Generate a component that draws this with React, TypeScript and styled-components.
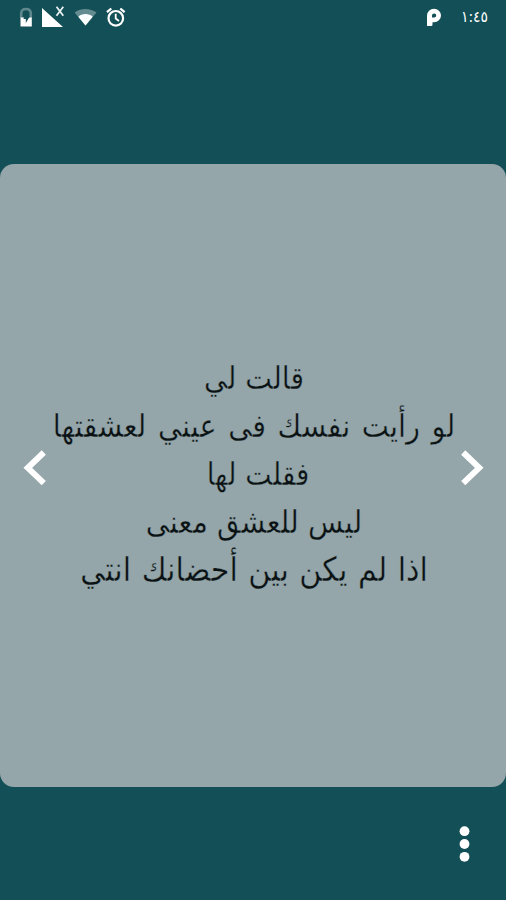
import React from "react";
import styled, { createGlobalStyle } from "styled-components";

const Global = createGlobalStyle`
  body { margin: 0; background: #124f56; }
`;

const Screen = styled.main`
  width: 506px;
  height: 900px;
  display: flex;
  flex-direction: column;
  background: #124f56;
  overflow: hidden;
`;

const StatusBar = styled.header`
  height: 164px;
  box-sizing: border-box;
  padding: 0 18px 0 19px;
  display: flex;
  justify-content: space-between;
  align-items: flex-start;
  color: #fff;
`;

const StatusGroup = styled.div<{ $gap: number }>`
  height: 34px;
  display: flex;
  align-items: center;
  gap: ${(p) => p.$gap}px;
`;

const Icon = styled.svg`
  display: block;
  flex: none;
`;

const Clock = styled.time`
  width: 27px;
  display: flex;
  justify-content: center;
  direction: rtl;
  white-space: nowrap;
  font: 15.5px/34px "DejaVu Sans Condensed", "DejaVu Sans", sans-serif;
`;

const Card = styled.section`
  height: 623px;
  box-sizing: border-box;
  padding: 0 22px 0 23px;
  border-radius: 14px;
  background: #94a6a9;
  display: flex;
  justify-content: space-between;
`;

const Quote = styled.div`
  flex: 1;
  padding-top: 190px;
  display: flex;
  flex-direction: column;
  align-items: center;
  direction: rtl;
`;

const Line = styled.p<{ $size: number; $space: number; $indent: number }>`
  margin: 0;
  padding-left: ${(p) => p.$indent}px;
  font: ${(p) => p.$size}px/48px "DejaVu Sans Condensed", "DejaVu Sans", sans-serif;
  word-spacing: ${(p) => p.$space}px;
  color: #0b1214;
  -webkit-text-stroke: 0.35px #94a6a9;
  white-space: nowrap;
`;

const ArrowButton = styled.button`
  width: 24px;
  height: 38px;
  margin: 285px 0 0;
  padding: 0;
  border: 0;
  background: none;
  color: #fff;
`;

const Footer = styled.footer`
  flex: 1;
  display: flex;
  justify-content: flex-end;
  align-items: center;
  padding-right: 36px;
`;

const MenuButton = styled.button`
  padding: 0;
  border: 0;
  background: none;
`;

const lines = [
  { text: "قالت لي", size: 31.5, space: 0, indent: 1 },
  { text: "لو رأيت نفسك فى عيني لعشقتها", size: 32, space: 2.5, indent: 1 },
  { text: "فقلت لها", size: 31, space: 0, indent: 9 },
  { text: "ليس للعشق معنى", size: 32, space: 0, indent: 1 },
  { text: "اذا لم يكن بين أحضانك انتي", size: 33.5, space: 1, indent: 1 },
];

export default function App() {
  return (
    <Screen lang="ar">
      <Global />
      <StatusBar>
        <StatusGroup $gap={9}>
          <Icon width="14" height="20" viewBox="0 0 14 20">
            <path d="M2.200 11V6.500Q2.200 2 7 2T11.800 6.500V11" fill="none" stroke="#5e888d" strokeWidth="2.600" />
            <path d="M1.500 10.500H12.800V19.500H1.500Z" fill="#fff" />
            <path d="M8.300 5L4.300 12H6.800V16L10.600 9.800H8.300Z" fill="#124f56" />
          </Icon>
          <Icon width="24" height="22" viewBox="0 0 24 22">
            <path d="M0 2V21H21Z" fill="#fff" />
            <path d="M14.500 .8L21.300 9.800M21.300 .8L14.500 9.800" stroke="#e8f0f1" strokeWidth="1.800" />
          </Icon>
          <Icon width="22" height="18" viewBox="0 0 22 18">
            <path d="M-.5 4.500C5.700 -.2 15.300 -.2 21.500 4.500L10.500 17.500Z" fill="#fff" opacity=".35" />
            <path d="M3.300 8.700C6.600 5 14.400 5 17.700 8.700L10.500 17.500Z" fill="#fff" />
          </Icon>
          <Icon width="20" height="20" viewBox="0 0 20 20" fill="none" stroke="#fff">
            <circle cx="9.800" cy="11.300" r="7.300" strokeWidth="2.200" />
            <path d="M1 5.200L5.300 1.500M18.600 5.200L14.300 1.500" strokeWidth="2.300" />
            <path d="M9.700 6.800V11.500L13 14" strokeWidth="1.800" />
          </Icon>
        </StatusGroup>
        <StatusGroup $gap={19}>
          <Icon width="16" height="19" viewBox="0 0 16 19">
            <path
              fill="#fff"
              fillRule="evenodd"
              d="M1 7.500A7 6.800 0 1 1 8 14.300H6.500V16.500Q6.500 18 5 18H1ZM6 7.500V9.600H8A2.100 2.100 0 1 0 6 7.500Z"
            />
          </Icon>
          <Clock>١:٤٥</Clock>
        </StatusGroup>
      </StatusBar>
      <Card>
        <ArrowButton aria-label="السابق">
          <Icon width="24" height="38" viewBox="0 0 24 38">
            <path d="M20.800 3.500L4.800 18.800L20.800 34.200" fill="none" stroke="#fff" strokeWidth="6" />
          </Icon>
        </ArrowButton>
        <Quote>
          {lines.map((l) => (
            <Line key={l.text} $size={l.size} $space={l.space} $indent={l.indent}>
              {l.text}
            </Line>
          ))}
        </Quote>
        <ArrowButton aria-label="التالي">
          <Icon width="24" height="38" viewBox="0 0 24 38">
            <path d="M3.200 3.500L19.200 18.800L3.200 34.200" fill="none" stroke="#fff" strokeWidth="6" />
          </Icon>
        </ArrowButton>
      </Card>
      <Footer>
        <MenuButton aria-label="المزيد">
          <Icon width="11" height="36" viewBox="0 0 11 36" fill="#fff">
            <circle cx="5.500" cy="5.200" r="4.900" />
            <circle cx="5.500" cy="18" r="4.900" />
            <circle cx="5.500" cy="30.800" r="4.900" />
          </Icon>
        </MenuButton>
      </Footer>
    </Screen>
  );
}
